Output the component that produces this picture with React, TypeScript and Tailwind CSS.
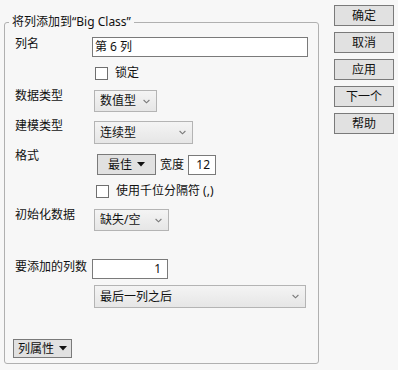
import React from "react";

const Chevron = () => (
  <svg width="7" height="5" viewBox="0 0 7 5">
    <path d="M0.6 1 L3.5 3.8 L6.4 1" fill="none" stroke="#7a7a7a" strokeWidth="1.1" />
  </svg>
);

const Tri = () => (
  <svg width="8" height="5" viewBox="0 0 8 5">
    <path d="M0 0H8L4 4.6Z" fill="#111" />
  </svg>
);

function Select({ text, w, h }: { text: string; w: string; h: string }) {
  return (
    <div
      className={`${w} ${h} flex items-center justify-between pl-[5px] pr-[6px] border border-[#b4b4b4] bg-gradient-to-b from-[#f4f4f4] to-[#e6e6e6]`}
    >
      <span>{text}</span>
      <Chevron />
    </div>
  );
}

function Check({ label }: { label: string }) {
  return (
    <div className="flex items-center gap-[7px]">
      <div className="w-[13px] h-[13px] border border-[#6f6f6f] bg-white" />
      <span>{label}</span>
    </div>
  );
}

const sideButtons = ["确定", "取消", "应用", "下一个", "帮助"];

export default function App() {
  return (
    <div className="w-[398px] h-[370px] bg-[#f7f7f7] text-[12px] leading-[16px] text-[#111] font-['Noto_Sans','Noto_Sans_CJK_SC',sans-serif] flex">
      <fieldset className="mt-[14px] ml-[4px] w-[315px] h-[350px] rounded-[3px] border border-[#b0b0b0] pl-[8px] pr-0 pb-0 pt-0">
        <legend className="-ml-[4px] px-[3px]">将列添加到“Big Class”</legend>

        <div className="mt-[7px] flex items-start">
          <div className="w-[79px] pl-[2px] -mt-[1px]">列名</div>
          <div className="w-[216px] h-[20px] border border-[#7a7a7a] bg-white pl-[2px] leading-[18px]">第 6 列</div>
        </div>

        <div className="mt-[8px] ml-[82px]">
          <Check label="锁定" />
        </div>

        <div className="mt-[9px] flex items-start">
          <div className="w-[79px] pl-[2px] -mt-[2px]">数据类型</div>
          <div className="ml-[2px]">
            <Select text="数值型" w="w-[63px]" h="h-[22px]" />
          </div>
        </div>

        <div className="mt-[9px] flex items-start">
          <div className="w-[79px] pl-[2px] -mt-[3px]">建模类型</div>
          <div className="ml-[2px]">
            <Select text="连续型" w="w-[99px]" h="h-[23px]" />
          </div>
        </div>

        <div className="mt-[10px] flex items-start">
          <div className="w-[79px] pl-[2px] -mt-[6px]">格式</div>
          <div className="ml-[5px] flex items-center">
            <div className="w-[59px] h-[21px] border border-[#7a7a7a] bg-[#e1e1e1] flex items-center justify-center gap-[5px]">
              <span>最佳</span>
              <Tri />
            </div>
            <span className="ml-[4px]">宽度</span>
            <div className="ml-[4px] w-[28px] h-[20px] border border-[#7a7a7a] bg-white text-right pr-[5px] leading-[18px]">12</div>
          </div>
        </div>

        <div className="mt-[8px] ml-[83px]">
          <Check label="使用千位分隔符 (,)" />
        </div>

        <div className="mt-[10px] flex items-start">
          <div className="w-[79px] pl-[2px] -mt-[2px]">初始化数据</div>
          <div className="ml-[2px]">
            <Select text="缺失/空" w="w-[75px]" h="h-[22px]" />
          </div>
        </div>

        <div className="mt-[28px] flex items-start">
          <div className="w-[79px] pl-[2px]">要添加的列数</div>
          <div className="w-[76px] h-[20px] border border-[#7a7a7a] bg-white text-right pr-[6px] leading-[18px]">1</div>
        </div>

        <div className="mt-[6px] ml-[81px]">
          <Select text="最后一列之后" w="w-[212px]" h="h-[23px]" />
        </div>

        <div className="mt-[31px] w-[59px] h-[19px] border border-[#7a7a7a] bg-[#e1e1e1] flex items-center justify-center gap-[5px]">
          <span>列属性</span>
          <Tri />
        </div>
      </fieldset>

      <div className="ml-[15px] pt-[5px] flex flex-col gap-[6px]">
        {sideButtons.map((b) => (
          <div
            key={b}
            className="w-[60px] h-[21px] border border-[#7a7a7a] bg-[#e1e1e1] flex items-center justify-center"
          >
            {b}
          </div>
        ))}
      </div>
    </div>
  );
}
